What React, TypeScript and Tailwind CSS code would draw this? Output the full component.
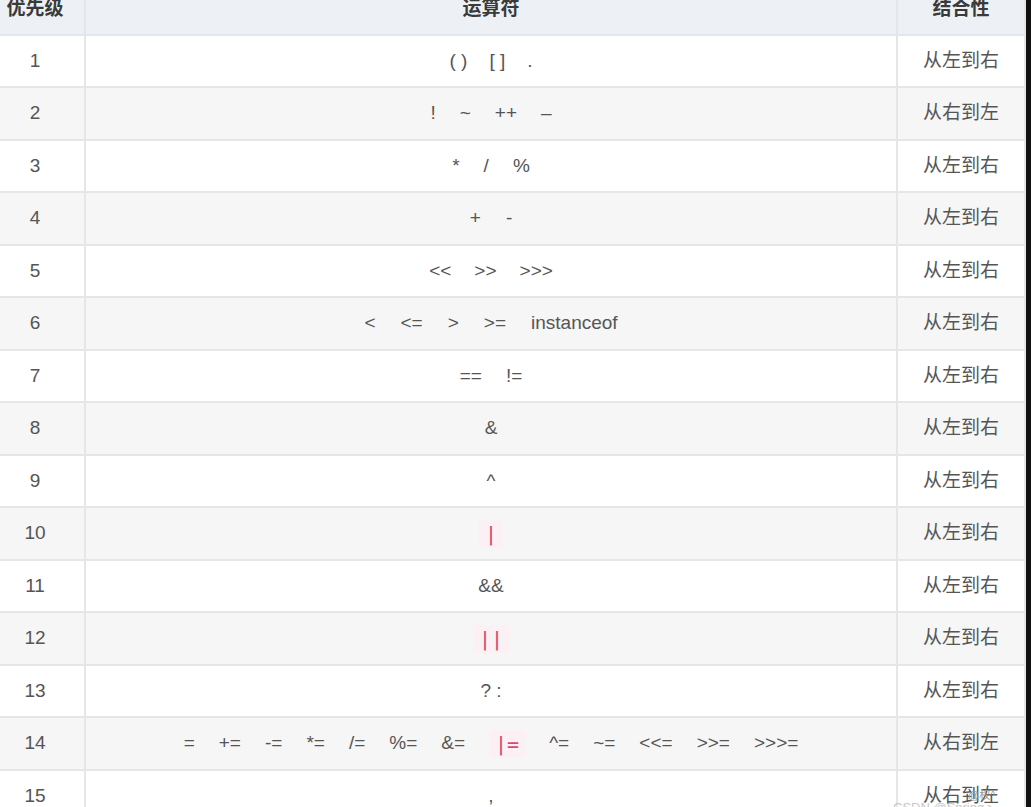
import React from "react";

type Item = string | { code: string };

const rows: { n: number; ops: Item[]; gap: number; assoc: string }[] = [
  { n: 1, ops: ["( )", "[ ]", "."], gap: 22, assoc: "从左到右" },
  { n: 2, ops: ["!", "~", "++", "–"], gap: 24, assoc: "从右到左" },
  { n: 3, ops: ["*", "/", "%"], gap: 24, assoc: "从左到右" },
  { n: 4, ops: ["+", "-"], gap: 25, assoc: "从左到右" },
  { n: 5, ops: ["<<", ">>", ">>>"], gap: 23, assoc: "从左到右" },
  { n: 6, ops: ["<", "<=", ">", ">=", "instanceof"], gap: 25, assoc: "从左到右" },
  { n: 7, ops: ["==", "!="], gap: 24, assoc: "从左到右" },
  { n: 8, ops: ["&"], gap: 24, assoc: "从左到右" },
  { n: 9, ops: ["^"], gap: 24, assoc: "从左到右" },
  { n: 10, ops: [{ code: "|" }], gap: 24, assoc: "从左到右" },
  { n: 11, ops: ["&&"], gap: 24, assoc: "从左到右" },
  { n: 12, ops: [{ code: "||" }], gap: 24, assoc: "从左到右" },
  { n: 13, ops: ["? :"], gap: 24, assoc: "从左到右" },
  {
    n: 14,
    ops: ["=", "+=", "-=", "*=", "/=", "%=", "&=", { code: "|=" }, "^=", "~=", "<<=", ">>=", ">>>="],
    gap: 24,
    assoc: "从右到左",
  },
  { n: 15, ops: [","], gap: 24, assoc: "从右到左" },
];

const font = { fontFamily: '"Liberation Sans", "Noto Sans CJK SC", Arial, sans-serif' };

export default function App() {
  return (
    <div className="relative w-[1031px] h-[807px] overflow-hidden bg-white" style={font}>
      <div className="flex h-full">
        <div className="w-[1026px] h-full overflow-hidden bg-white">
          <div className="-mt-[16px] -ml-[14px] w-[1040px] border-r-2 border-[#e6e6e6]">
            {/* header */}
            <div className="flex h-[52px] bg-[#edf1f5] border-b-2 border-[#e3e6ea] text-[19px] font-bold text-[#3a3a3a]">
              <div className="w-[100px] border-r-2 border-[#e3e6ea] flex items-center justify-center">优先级</div>
              <div className="w-[812px] border-r-2 border-[#e3e6ea] flex items-center justify-center">运算符</div>
              <div className="flex-1 flex items-center justify-center">结合性</div>
            </div>
            {rows.map((r) => (
              <div
                key={r.n}
                className={`flex border-b-2 border-[#e6e6e6] text-[19px] text-[#555555] ${
                  r.n % 2 === 1 ? "h-[52px] bg-white" : "h-[53px] bg-[#f6f6f6]"
                }`}
              >
                <div className="w-[100px] border-r-2 border-[#e6e6e6] flex items-center justify-center">{r.n}</div>
                <div
                  className="w-[812px] border-r-2 border-[#e6e6e6] flex items-center justify-center"
                  style={{ gap: r.gap }}
                >
                  {r.ops.map((o, i) =>
                    typeof o === "string" ? (
                      <span key={i} className="whitespace-pre">
                        {o}
                      </span>
                    ) : (
                      <span
                        key={i}
                        className="whitespace-pre bg-[#fbf1f4] text-[#e0456e] px-[6px] py-[3px] rounded-[2px] text-[20px] leading-[22px]"
                        style={{ fontFamily: '"DejaVu Sans Mono", monospace' }}
                      >
                        {o.code}
                      </span>
                    )
                  )}
                </div>
                <div className="flex-1 flex items-center justify-center">{r.assoc}</div>
              </div>
            ))}
          </div>
        </div>
        <div className="flex-1 bg-[#111111]" />
      </div>
      <div className="absolute left-[893px] top-[798px] text-[13px] text-[#c8c8c8] whitespace-nowrap">CSDN @Spring丶</div>
      <div className="absolute left-[968px] top-[787px] text-[11px] text-[#9a9a9a] whitespace-nowrap">@权^</div>
    </div>
  );
}
